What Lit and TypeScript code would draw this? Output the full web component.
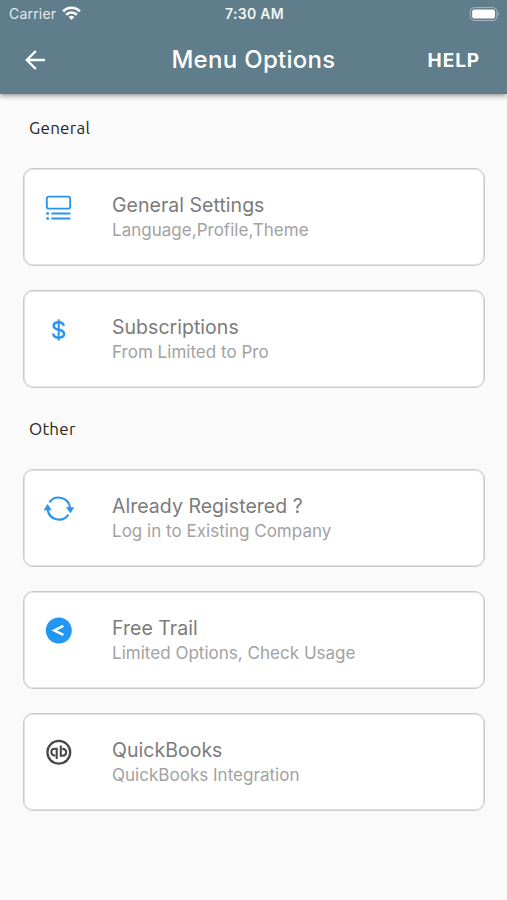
import { LitElement, html, css, svg } from "lit";
import { customElement } from "lit/decorators.js";

const icons = {
  settings: svg`<g fill="none" stroke="#2a95ee" stroke-width="1.9">
    <rect x="3.8" y="5.6" width="23.4" height="12" rx="2.2"/>
    <path d="M8.4 22.5H27.4M8.4 27.5H27.4"/><path d="M3.3 22.5H5.9M3.3 27.5H5.9" stroke-width="2.4"/></g>`,
  dollar: svg`<g fill="none" stroke="#2a95ee" stroke-width="2.5">
    <path d="M20.7 12.9C20.4 10.4 18.4 9.2 15.6 9.2C12.6 9.2 10.7 10.6 10.7 12.9C10.7 18.2 21.1 15.1 21.1 20.7C21.1 23.2 18.8 24.6 15.8 24.6C12.6 24.6 10.4 23.2 10.2 20.5"/>
    <path d="M15.7 6.3V27.5" stroke-width="2"/></g>`,
  sync: svg`<g fill="none" stroke="#2a95ee" stroke-width="2.1">
    <path d="M6.4 10.4A11.4 11.4 0 0 1 27 16M25.4 22.6A11.4 11.4 0 0 1 4.7 17.5"/></g>
    <path fill="#2a95ee" d="M22.8 15.2H31.2L27.5 21.2ZM.6 18.2H8.8L4.6 12Z"/>`,
  share: svg`<circle cx="15.8" cy="16.5" r="13" fill="#2196f3"/>
    <path d="M20.4 11.9L11.2 16.4L20.4 20.9" fill="none" stroke="#fff" stroke-width="2.4"/>`,
  quickbooks: svg`<g fill="none" stroke="#484848">
    <circle cx="15.8" cy="16.3" r="11.4" stroke-width="2.3"/>
    <path stroke-width="2.1" d="M13.7 23V12.7H12C9.4 12.7 8.3 13.8 8.3 16.1C8.3 18.4 9.4 19.5 12 19.5H12.3M17.8 9.4V19.7H19.6C22.1 19.7 23.2 18.5 23.2 16.3C23.2 14.1 22.1 12.9 19.6 12.9H19.3"/></g>`,
};

const sections = [
  {
    name: "General",
    items: [
      { icon: icons.settings, title: "General Settings", detail: "Language,Profile,Theme" },
      { icon: icons.dollar, title: "Subscriptions", detail: "From Limited to Pro" },
    ],
  },
  {
    name: "Other",
    items: [
      { icon: icons.sync, title: "Already Registered ?", detail: "Log in to Existing Company" },
      { icon: icons.share, title: "Free Trail", detail: "Limited Options, Check Usage" },
      { icon: icons.quickbooks, title: "QuickBooks", detail: "QuickBooks Integration" },
    ],
  },
];

@customElement("app-root")
export class AppRoot extends LitElement {
  static styles = css`
    :host {
      display: block;
      height: 900px;
      overflow: hidden;
      background: #fafafa;
      font-family: Inter, "Liberation Sans", sans-serif;
    }
    svg { display: block; flex: none; }
    header {
      height: 94px;
      box-sizing: border-box;
      background: #607d8b;
      color: #fff;
      box-shadow: 0 2px 5px rgba(0, 0, 0, 0.4);
    }
    .status, .bar {
      display: grid;
      grid-template-columns: 1fr auto 1fr;
      align-items: center;
    }
    .status { height: 27px; padding: 0 7px 1px 9px; }
    .carrier { display: flex; align-items: center; gap: 6px; font-size: 14px; letter-spacing: 0.2px; color: #e3eaed; }
    .time { font-size: 14px; font-weight: 600; letter-spacing: 0.3px; color: #f2f5f6; }
    .battery, .help { justify-self: end; }
    .bar { height: 64px; padding: 0 27px 0 23px; }
    h1 { margin: 0; padding-left: 4px; font-size: 24px; line-height: 32px; font-weight: 500; letter-spacing: 0.3px; }
    .help { font-size: 19px; font-weight: 700; letter-spacing: 0.9px; }
    main { padding: 0 22px 0 23px; }
    h2 {
      margin: 0;
      padding-left: 6px;
      height: 74px;
      font: 400 17px/68px Ubuntu, "Noto Sans", sans-serif;
      letter-spacing: 0.25px;
      color: #252525;
    }
    section + section h2 { height: 81px; line-height: 81px; }
    .cards { display: flex; flex-direction: column; gap: 24px; }
    .card {
      height: 98px;
      box-sizing: border-box;
      display: flex;
      gap: 37.5px;
      padding: 22px 20px 0 18.5px;
      border: 1px solid #c9c9c9;
      border-radius: 10px;
      background: #fff;
      box-shadow: inset 0 0 0 1px #e3e3e3;
    }
    .title { font-size: 19.5px; line-height: 28px; letter-spacing: 0.03px; color: #7b7b7b; }
    .detail { font-size: 17px; line-height: 23px; letter-spacing: 0.02px; color: #a2a2a2; }
  `;

  render() {
    return html`
      <header>
        <div class="status">
          <div class="carrier">
            <span>Carrier</span>
            <svg width="19" height="15" viewBox="0 0 19 15">
              <g fill="none" stroke="#fff" stroke-width="2.6"><path d="M1.1 5.3C5.8 .5 13.2 .5 17.9 5.3"/><path d="M4.2 8.7C7.2 5.8 11.8 5.8 14.8 8.7"/></g>
              <path fill="#fff" d="M6.6 11Q9.5 8.7 12.4 11L9.5 14Z"/>
            </svg>
          </div>
          <div class="time">7:30 AM</div>
          <svg class="battery" width="32" height="16" viewBox="0 0 32 16">
            <rect x="2.3" y="1.6" width="26.6" height="12.9" rx="3.8" fill="none" stroke="#a5b5bd" stroke-width="1"/>
            <rect x="4.2" y="3.5" width="22.8" height="9.1" rx="2" fill="#fff"/>
            <path d="M29.8 5.8Q32 8.1 29.8 10.4Z" fill="#a5b5bd"/>
          </svg>
        </div>
        <div class="bar">
          <svg width="24" height="24" viewBox="0 0 24 24"><path d="M22 12H4M12.8 3L3.8 12L12.8 21" fill="none" stroke="#fff" stroke-width="2.4"/></svg>
          <h1>Menu Options</h1>
          <div class="help">HELP</div>
        </div>
      </header>
      <main>
        ${sections.map(
          (s) => html`<section>
            <h2>${s.name}</h2>
            <div class="cards">
              ${s.items.map(
                (i) => html`<div class="card">
                  <svg width="32" height="32" viewBox="0 0 32 32">${i.icon}</svg>
                  <div>
                    <div class="title">${i.title}</div>
                    <div class="detail">${i.detail}</div>
                  </div>
                </div>`,
              )}
            </div>
          </section>`,
        )}
      </main>
    `;
  }
}
